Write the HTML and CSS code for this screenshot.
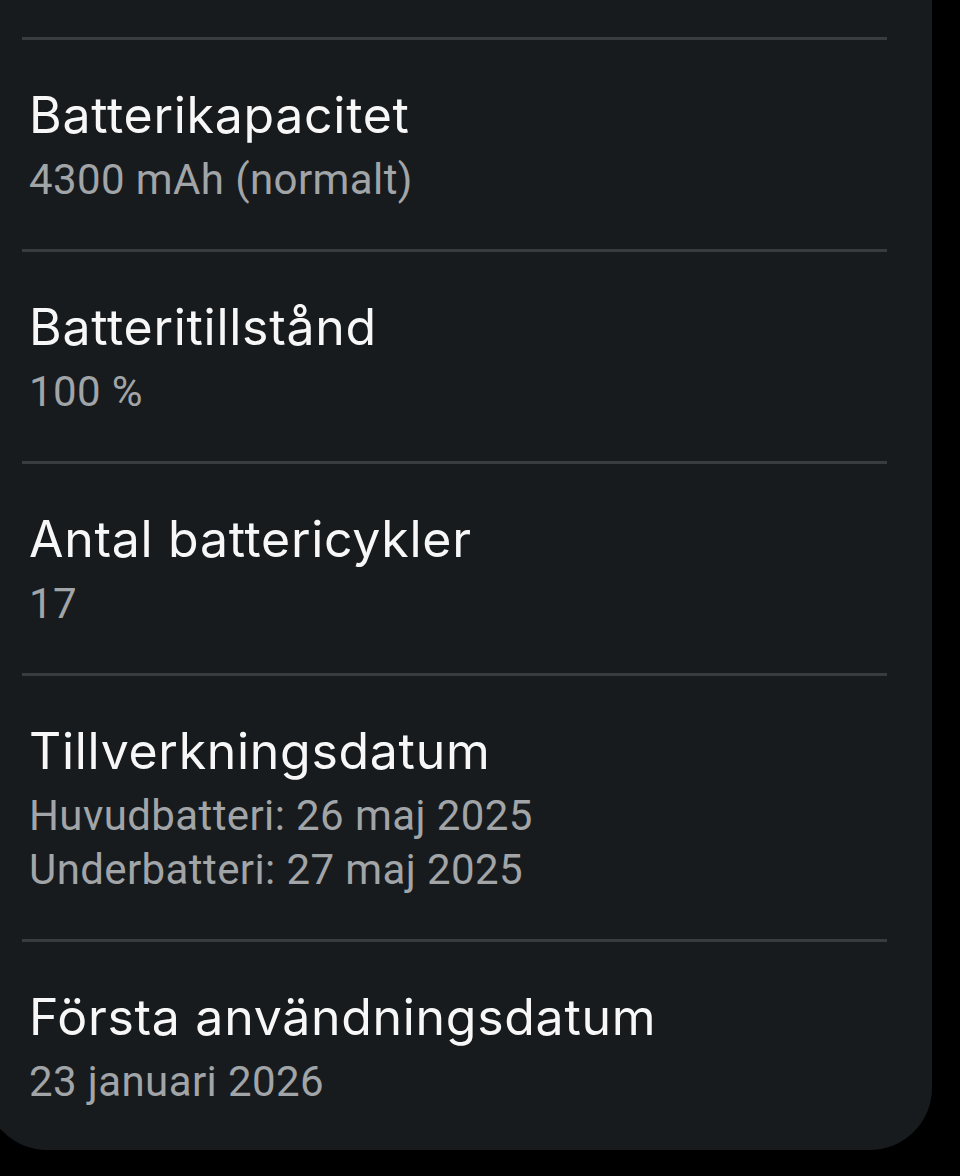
FILE: index.html
```html
<!DOCTYPE html>
<html lang="sv">
<head>
  <meta charset="UTF-8">
  <meta name="viewport" content="width=device-width, initial-scale=1.0">
  <title>Batteriinformation</title>
  <link rel="stylesheet" href="styles.css">
</head>
<body>
  <div class="panel">
    <ul class="info-list">
      <li class="info-item">
        <div class="info-title">Batterikapacitet</div>
        <div class="info-value">4300 mAh (normalt)</div>
      </li>
      <li class="info-item">
        <div class="info-title">Batteritillstånd</div>
        <div class="info-value">100 %</div>
      </li>
      <li class="info-item">
        <div class="info-title">Antal battericykler</div>
        <div class="info-value">17</div>
      </li>
      <li class="info-item">
        <div class="info-title">Tillverkningsdatum</div>
        <div class="info-value">Huvudbatteri: 26 maj 2025</div>
        <div class="info-value">Underbatteri: 27 maj 2025</div>
      </li>
      <li class="info-item last">
        <div class="info-title">Första användningsdatum</div>
        <div class="info-value">23 januari 2026</div>
      </li>
    </ul>
  </div>
</body>
</html>
```

FILE: styles.css
```css
body {
  margin: 0;
  padding: 0;
  background-color: #000;
  font-family: Inter, "Noto Sans", sans-serif;
  overflow: hidden;
}
.panel {
  margin-left: -15px;
  width: 947px;
  background-color: #171b1e;
  border-radius: 0 0 62px 62px;
  padding-top: 37px;
}
.info-list {
  list-style: none;
  margin: 0;
  padding: 0 45px 0 37px;
}
.info-item {
  border-top: 3px solid #383c3f;
  padding: 45px 0 42px 7px;
}
.info-item.last {
  padding-bottom: 41px;
}
.info-title {
  color: #f7f7f7;
  font-size: 50px;
  line-height: 60px;
  letter-spacing: 0.7px;
  margin-bottom: 8px;
}
.info-value {
  color: #a2a5a8;
  font-family: Roboto, "Noto Sans", sans-serif;
  font-size: 42px;
  line-height: 54px;
  letter-spacing: 0.4px;
}
```
